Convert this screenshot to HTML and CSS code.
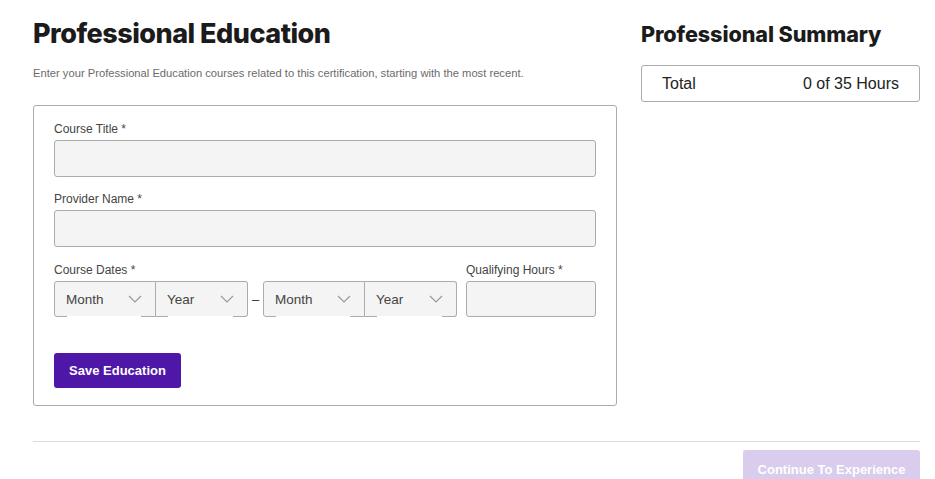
FILE: index.html
```html
<!DOCTYPE html>
<html lang="en">
<head>
<meta charset="utf-8">
<title>Professional Education</title>
<link rel="stylesheet" href="styles.css">
</head>
<body>
<div class="page">
  <div class="columns">
    <main class="main">
      <h1 class="title">Professional Education</h1>
      <p class="intro">Enter your Professional Education courses related to this certification, starting with the most recent.</p>
      <form class="card">
        <div class="field">
          <label class="label">Course Title *</label>
          <div class="input"></div>
        </div>
        <div class="field">
          <label class="label">Provider Name *</label>
          <div class="input"></div>
        </div>
        <div class="row">
          <div class="field">
            <label class="label">Course Dates *</label>
            <div class="dates">
              <div class="pair">
                <div class="select select-month"><span>Month</span><svg class="chev" viewBox="0 0 14 8" width="14" height="8"><path d="M1 1l6 6 6-6" fill="none" stroke="#9a9a9a" stroke-width="1.2"/></svg></div>
                <div class="select select-year"><span>Year</span><svg class="chev" viewBox="0 0 14 8" width="14" height="8"><path d="M1 1l6 6 6-6" fill="none" stroke="#9a9a9a" stroke-width="1.2"/></svg></div>
              </div>
              <span class="dash">–</span>
              <div class="pair">
                <div class="select select-month"><span>Month</span><svg class="chev" viewBox="0 0 14 8" width="14" height="8"><path d="M1 1l6 6 6-6" fill="none" stroke="#9a9a9a" stroke-width="1.2"/></svg></div>
                <div class="select select-year"><span>Year</span><svg class="chev" viewBox="0 0 14 8" width="14" height="8"><path d="M1 1l6 6 6-6" fill="none" stroke="#9a9a9a" stroke-width="1.2"/></svg></div>
              </div>
            </div>
          </div>
          <div class="field">
            <label class="label">Qualifying Hours *</label>
            <div class="input input-hours"></div>
          </div>
        </div>
        <button type="button" class="btn-save">Save Education</button>
      </form>
    </main>
    <aside class="side">
      <h2 class="side-title">Professional Summary</h2>
      <div class="total">
        <span>Total</span>
        <span>0 of 35 Hours</span>
      </div>
    </aside>
  </div>
  <hr class="divider">
  <div class="footer">
    <button type="button" class="btn-continue">Continue To Experience</button>
  </div>
</div>
</body>
</html>
```

FILE: styles.css
```css
* { box-sizing: border-box; }
html, body { margin: 0; padding: 0; background: #fff; }
body {
  font-family: "Liberation Sans", Arial, sans-serif;
  color: #222;
}
.page {
  width: 920px;
  padding-left: 33px;
}
.columns {
  display: flex;
  gap: 24px;
}
.main { width: 584px; }
.side { width: 279px; }

.title {
  font-family: Inter, "Noto Sans", sans-serif;
  font-weight: 800;
  font-size: 27px;
  letter-spacing: -0.5px;
  line-height: 34px;
  margin: 17px 0 0;
  color: #1b1b1b;
}
.intro {
  font-size: 11.2px;
  color: #6b6b6b;
  margin: 15px 0 0;
  line-height: 14px;
}
.card {
  margin-top: 25px;
  border: 1px solid #ababab;
  border-radius: 3px;
  padding: 16px 20px 17px;
  display: flex;
  flex-direction: column;
  gap: 15px;
}
.field {
  display: flex;
  flex-direction: column;
  gap: 4px;
}
.label {
  font-size: 12px;
  line-height: 14px;
  color: #444;
}
.input {
  height: 37px;
  background: #f4f4f4;
  border: 1px solid #ababab;
  border-radius: 3px;
}
.input-hours { height: 36px; }
.row {
  display: grid;
  grid-template-columns: 403px 130px;
  gap: 9px;
  margin-top: 1px;
}
.dates {
  display: flex;
  align-items: center;
}
.pair {
  display: flex;
}
.dash {
  width: 15px;
  text-align: center;
  font-size: 13px;
  color: #333;
}
.select {
  position: relative;
  height: 36px;
  background: #f4f4f4;
  border: 1px solid #ababab;
  display: flex;
  align-items: center;
  justify-content: space-between;
  padding: 0 13px 0 11px;
  font-size: 13.5px;
  color: #444;
}
.select::after {
  content: "";
  position: absolute;
  left: 12px;
  right: 14px;
  bottom: -1px;
  height: 1px;
  background: #fff;
}
.select-month {
  width: 102px;
  border-radius: 3px 0 0 3px;
}
.select-year {
  width: 92px;
  border-left: none;
  border-radius: 0 3px 3px 0;
}
.chev { display: block; }

.btn-save {
  align-self: flex-start;
  margin-top: 21px;
  width: 127px;
  height: 35px;
  background: #4f17a8;
  color: #fff;
  border: none;
  border-radius: 3px;
  font-family: "Liberation Sans", Arial, sans-serif;
  font-weight: 700;
  font-size: 13px;
  padding: 0;
}

.side-title {
  font-family: Inter, "Noto Sans", sans-serif;
  font-weight: 800;
  font-size: 21.6px;
  letter-spacing: -0.1px;
  line-height: 26px;
  margin: 21px 0 0;
  color: #1b1b1b;
}
.total {
  margin-top: 18px;
  height: 37px;
  border: 1px solid #ababab;
  border-radius: 3px;
  display: flex;
  align-items: center;
  justify-content: space-between;
  padding: 0 20px;
  font-size: 16px;
  color: #222;
}

.divider {
  margin: 35px 0 0;
  border: none;
  border-top: 1px solid #dcdcdc;
  height: 0;
}
.footer {
  display: flex;
  justify-content: flex-end;
  padding-top: 8px;
}
.btn-continue {
  width: 177px;
  height: 38px;
  background: #d9ccec;
  color: #fff;
  border: none;
  border-radius: 3px;
  font-family: "Liberation Sans", Arial, sans-serif;
  font-weight: 700;
  font-size: 13px;
  padding: 0;
}
```
